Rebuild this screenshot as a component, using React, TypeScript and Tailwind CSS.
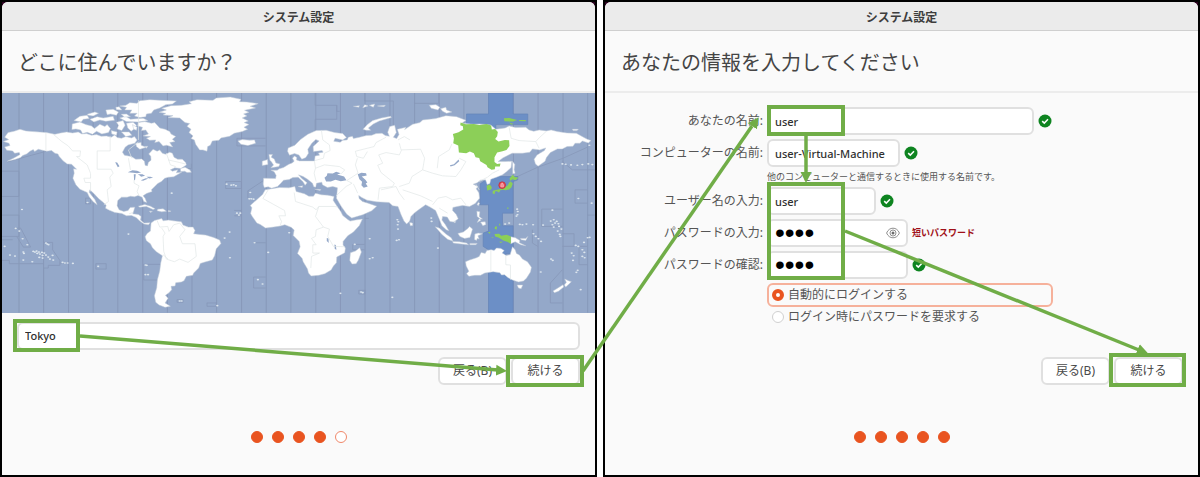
import type { ReactNode } from "react";

const zoneLines = Array.from({ length: 24 }, (_, i) => 57 + Math.round(i * 74.3));

const zoneBorders = [
  "M6 244H57V320H6M6 376H57V440H6M42 415H62L92 472H70L50 440M6 450H38M6 512H28V522H131",
  "M131 458H158V480L180 512V527H145V535H131V669M288 522H319V538H288ZM257 325H272V342H257ZM432 524H490M432 524V571H476M532 630H550V638H532Z",
  "M180 520H205M131 458V470M22 216L95 196L140 184M543 236H575V222",
  "M798 145H712V168H798M678 275H725V296H678ZM745 325V303L795 270M704 362H725V378H704M762 459H798M762 562H798M762 562V595H798M622 640H650V650H622Z",
  "M947 9V46H1012V88H947V122M1012 46V64H1021M1096 9V33H1182V110M1060 464V480H1096M1060 464H1096M1078 602H1097V613H1078ZM1096 386H1108",
  "M1244 40H1318V9M1542 266L1616 232L1690 206L1765 172M1690 215L1720 240H1788M1765 300H1728V340H1765M1765 376H1788M1690 358H1628V410H1690",
  "M1690 432H1725V470H1690M1600 420V460L1616 470M1690 540L1654 580V640H1690M1765 470H1740V525H1765",
];

const americas = [
  // mainland north america
  "M10 155L26 149L14 142L24 128L42 124L60 118L78 123L100 125L140 128L165 133L182 129L200 126L218 129L235 126L246 132L260 131L275 136L290 134L304 139L320 138L334 142L345 135L352 143L365 145L378 140L395 144L404 140L412 150L405 160L385 165L376 172L368 187L374 196L395 200L408 208L426 207L434 214L436 226L443 228L446 217L454 211L453 199L447 192L460 178L472 184L480 180L488 190L497 193L510 187L518 190L523 202L534 208L548 208L558 218L560 225L544 236L525 234L512 240L518 244L534 240L530 249L546 247L522 261L506 262L495 265L485 275L474 281L465 290L455 300L457 305L440 311L430 318L436 325L441 338L432 335L427 322L415 317L404 321L392 319L382 322L365 322L354 332L352 348L358 360L372 365L385 362L391 353L405 352L402 363L399 372L416 374L424 380L422 391L433 400L451 399L446 405L433 403L420 394L409 383L395 377L380 378L366 371L345 368L328 361L317 355L319 346L308 336L297 327L282 311L270 300L268 307L277 319L285 329L292 345L280 336L268 321L262 308L240 298L228 285L219 265L223 250L221 237L230 238L215 223L202 222L190 213L178 200L174 192L165 190L155 182L140 184L115 178L104 185L100 179L90 184L80 192L68 197L62 203L45 209L22 214L42 204L60 194L58 188L44 190L38 183L20 181L14 171L30 167L27 160Z",
  // arctic archipelago
  "M360 48L378 46L390 38L412 40L420 32L450 29L480 31L530 33L518 42L498 44L480 54L462 60L455 70L440 72L438 80L420 83L404 78L412 70L390 70L396 60L375 60L380 52Z",
  "M415 98L435 95L455 100L465 98L480 114L496 118L510 125L514 132L528 140L518 148L526 155L510 158L519 171L500 166L490 168L478 155L465 158L468 150L450 151L440 145L452 140L430 138L446 132L438 120L425 122L428 112L414 108Z",
  "M217 102L240 96L258 104L275 108L284 116L300 103L315 110L322 104L332 116L326 128L306 132L290 124L278 133L262 127L248 131L242 120L228 117L216 119Z",
  "M222 92L240 79L262 76L268 86L250 88L244 96ZM262 73L285 66L296 70L280 78L266 76ZM270 88L292 80L310 84L340 79L344 91L318 94L300 90L282 96Z",
  "M318 60L340 58L356 66L350 76L332 72L322 74ZM350 97L370 92L376 106L366 122L352 117L356 106ZM380 100L400 97L410 106L402 118L394 124L384 114ZM360 84L378 79L392 88L430 85L444 92L415 96L380 95Z",
  "M348 52L358 50L366 60L350 59ZM364 73L380 72L392 80L374 81ZM334 122L352 126L350 136L336 132ZM365 126L388 126L396 136L378 140ZM408 160L424 158L424 166L440 172L420 178L410 170ZM434 170L444 169L440 175ZM398 104L412 112L410 121L402 118Z",
  // caribbean
  "M416 349L435 344L452 349L466 357L460 359L440 350L420 352ZM474 358L490 357L500 364L486 366L472 363ZM449 364L458 365L452 368ZM506 362L514 364L506 366ZM542 236L556 232L570 240L575 247L562 248L555 244L543 245Z",
  // greenland
  "M478 67L500 60L486 55L514 47L545 46L575 41L568 35L592 29L640 31L650 24L692 21L724 28L720 35L742 36L776 41L752 49L768 54L735 61L748 67L732 72L742 78L728 84L746 93L734 98L748 104L733 112L744 118L728 125L704 130L690 139L664 144L658 151L638 153L632 166L624 170L622 184L610 180L600 180L588 163L584 150L574 146L580 138L568 128L574 118L562 109L570 101L556 98L540 84L505 83L520 77L490 75L498 70Z",
  // south america
  "M454 400L464 392L486 386L490 393L506 391L521 393L545 396L550 406L566 412L580 412L586 422L582 432L600 434L618 436L642 443L660 451L664 461L650 477L645 498L638 511L616 517L602 521L597 535L582 550L579 557L560 560L553 573L545 577L528 579L526 589L514 590L516 600L507 610L497 617L505 626L496 640L512 650L496 653L478 646L468 638L464 618L471 594L473 570L480 544L483 520L488 498L470 486L458 474L452 462L440 453L436 441L442 431L452 424Z",
];

const oldWorld = [
  // africa
  "M808 298L840 293L868 294L886 290L890 305L915 312L928 319L942 319L948 310L966 315L985 316L1004 320L1001 331L1014 351L1024 365L1030 377L1045 389L1052 394L1072 390L1089 388L1080 407L1062 427L1045 438L1031 455L1031 466L1038 475L1036 489L1012 502L1011 519L1002 529L995 541L976 552L958 557L935 559L927 550L924 538L911 516L908 506L894 491L902 471L899 455L881 437L884 421L876 413L856 405L842 409L822 412L798 415L782 404L772 400L758 380L753 371L757 354L752 347L770 331L789 314L797 300Z",
  "M1053 489L1068 484L1081 474L1086 487L1077 511L1070 522L1058 523L1051 512Z",
  // eurasia
  "M792 265L828 266L830 257L824 246L814 241L833 241L839 237L852 233L868 223L878 219L884 214L879 205L885 198L892 203L891 210L900 213L925 213L945 213L947 198L960 196L957 189L971 187L968 182L942 185L941 170L959 153L949 149L937 160L925 178L927 190L919 203L907 208L898 195L885 191L870 196L864 184L866 174L886 166L903 149L925 133L950 122L980 121L1006 128L1030 131L1041 143L1030 150L1007 145L1003 154L1022 157L1030 151L1043 150L1047 142L1059 139L1062 146L1080 142L1100 137L1117 136L1130 131L1148 130L1158 137L1170 139L1165 127L1171 110L1186 106L1191 128L1182 142L1192 146L1199 134L1194 118L1220 112L1216 119L1240 103L1262 98L1270 90L1309 86L1340 77L1372 80L1400 91L1388 100L1424 103L1441 102L1475 105L1490 118L1518 114L1530 108L1549 113L1580 112L1590 120L1604 124L1620 120L1642 123L1656 120L1675 125L1704 129L1732 130L1752 141L1765 148L1776 152L1768 159L1750 153L1743 160L1728 160L1722 169L1704 170L1690 177L1675 177L1654 188L1642 203L1638 214L1617 229L1609 222L1605 208L1614 195L1636 182L1640 174L1622 180L1600 177L1592 187L1570 190L1539 190L1511 204L1497 215L1519 215L1538 214L1536 233L1523 245L1510 255L1492 262L1475 268L1472 281L1464 284L1459 270L1444 271L1434 279L1422 283L1436 290L1431 297L1439 309L1441 325L1428 341L1411 350L1390 347L1374 350L1361 353L1360 362L1371 374L1377 387L1364 397L1352 395L1344 382L1330 380L1328 391L1338 404L1349 423L1341 420L1328 408L1318 383L1309 362L1293 352L1279 345L1262 357L1246 369L1235 380L1231 394L1222 403L1214 394L1205 374L1196 350L1180 348L1169 338L1131 336L1103 331L1087 323L1078 317L1079 326L1089 335L1106 340L1132 349L1117 363L1090 375L1057 385L1042 373L1025 349L1011 325L1013 306L1014 294L1000 290L984 293L969 285L967 277L951 280L949 292L943 291L939 280L924 268L911 260L897 255L907 266L923 279L917 286L910 275L896 262L880 263L869 269L852 271L844 280L834 290L816 295L806 291L794 293L791 283Z",
  // british isles, iceland
  "M808 194L819 194L815 202L824 207L829 219L841 222L838 230L814 234L822 225L816 216L811 211ZM788 214L804 209L805 224L788 227ZM715 153L728 149L750 151L765 150L768 160L745 167L724 163Z",
  // arctic russia
  "M1091 118L1104 104L1120 92L1146 84L1174 79L1176 83L1140 93L1122 102L1107 114L1114 121L1100 121ZM1062 49L1080 47L1078 52ZM1096 44L1106 48L1090 53ZM1110 46L1126 42L1122 52ZM1134 48L1158 46L1154 50Z",
  "M1290 46L1310 44L1322 52L1316 60L1296 55ZM1324 56L1340 52L1342 60L1358 66L1342 70L1330 64ZM1720 118L1738 118L1734 122L1722 122ZM946 298L964 299L962 302ZM896 290L910 288L908 293Z",
  "M1540 214L1547 224L1545 240L1548 250L1541 252ZM1437 338L1441 340L1437 348L1434 344ZM1231 398L1240 400L1240 407L1233 408ZM1364 394L1370 396L1366 400Z",
  // southeast asia
  "M1308 411L1320 415L1340 433L1356 444L1361 454L1346 449L1328 434ZM1360 455L1380 456L1402 460L1408 465L1380 462L1362 460ZM1412 461L1434 461L1430 465L1412 465ZM1376 431L1392 427L1406 416L1411 410L1420 418L1416 431L1412 443L1396 446L1382 440Z",
  "M1427 433L1437 430L1450 432L1436 438L1440 448L1434 446L1432 452L1426 449ZM1433 364L1442 366L1440 380L1450 388L1444 388L1434 380ZM1444 397L1458 396L1460 404L1451 408ZM1440 387L1446 391L1434 398Z",
  "M1535 441L1549 444L1562 452L1561 459L1580 468L1565 465L1548 456L1535 462ZM1564 446L1580 446L1586 440L1580 452L1566 450Z",
  // oceania
  "M1399 516L1411 511L1432 504L1440 500L1446 488L1458 491L1463 482L1476 480L1485 482L1492 475L1505 476L1515 482L1509 490L1521 497L1533 495L1540 471L1548 480L1552 491L1561 496L1570 508L1585 516L1597 533L1594 547L1582 566L1573 574L1558 577L1540 571L1527 564L1516 555L1507 556L1502 549L1482 546L1457 550L1444 557L1427 557L1409 560L1402 552L1409 545L1401 529ZM1554 586L1571 586L1566 597L1558 595Z",
  "M1697 568L1708 573L1717 576L1710 583L1700 592L1696 586L1702 578ZM1692 585L1694 592L1678 605L1666 609L1662 604L1678 594Z",
];

const lakes = [
  "M384 247L398 241L412 243L424 248L412 250L400 249ZM402 253L408 253L406 270L403 272ZM414 253L428 253L436 258L424 261L420 257ZM423 271L438 265L446 266L430 273ZM440 261L452 261L460 264L448 266ZM346 217L352 218L359 229L354 232Z",
  "M975 264L982 258L984 250L1000 251L1010 246L1024 250L1013 254L1034 260L1041 271L1024 274L1008 270L994 275L980 275ZM1075 253L1086 249L1100 250L1102 257L1087 260L1098 270L1104 278L1099 281L1105 290L1093 294L1086 286L1088 276L1080 268Z",
  "M1352 226L1364 223L1378 209L1380 214L1366 226L1354 230ZM982 445L987 446L988 460L982 454ZM1005 464L1009 466L1011 480L1006 478Z",
];

const countryLines = [
  "M138 129V183M160 133L186 155L205 168L218 183H242L240 200H230L262 225L272 250V265H252L256 278H272V305M331 138V183H292V238H334L340 250L330 262L334 290L322 300L326 335L312 345",
  "M416 30V150M416 156L386 180L396 205M386 205L392 240M403 270V280L418 288L412 305L418 318M500 190L512 225L528 230M388 372L400 368M505 210L540 218L556 222",
  "M472 392L480 412L504 410L508 425L522 405L540 400L556 420L540 440L548 462H586L590 500L565 518L540 508L524 516L500 508L492 485L490 440L496 430L486 415M490 495L505 508",
  "M806 300L790 326L855 362L858 378H838L846 395L842 408M884 308L888 335L940 352L950 360L958 350H1004L1014 351M958 350L948 380L972 412L990 418L985 440L1002 470L1036 471M972 412L950 420L948 440L936 446L950 465H940V490H960L936 500L934 535",
  "M945 214L948 235L944 250L950 275M966 122L970 150L990 165L992 182L975 190L972 205L946 212M948 235L975 225L1020 230L1036 240L1025 252M1160 142L1130 158L1124 170L1068 184L1072 200L1092 205L1104 185M1074 205L1068 225L1076 250L1042 272L1058 280L1040 290L1010 318",
  "M1138 195L1160 188L1200 195L1206 182L1200 160M1138 195L1150 220L1135 226L1145 248L1185 280L1180 290L1140 295L1136 330M1062 282L1075 310M1145 300L1190 290L1200 310L1215 330",
  "M1206 180L1264 178L1276 205L1270 240L1300 250L1330 258L1370 260L1385 240L1400 215L1380 205M1196 150L1215 140L1232 150M1270 240L1238 260L1230 280L1200 290M1210 300L1264 318L1300 335M1314 235L1318 200L1350 180L1358 162M1530 112L1536 145L1560 152L1610 155L1620 175M1610 155L1622 142L1642 124M1300 345L1316 325L1340 320L1360 330L1385 325L1400 345M1320 355L1345 370M1430 283L1440 300",
  "M1475 482V545M1520 496V525L1534 526V570M1440 275L1465 262L1480 250L1500 240",
];

const highlighted = [
  "M1384 98L1400 103L1424 102L1440 105L1462 102L1476 107L1478 119L1488 117L1496 126L1494 139L1488 147L1498 155L1517 150L1530 151L1531 168L1522 180L1510 184L1494 188L1486 202L1486 216L1494 222L1504 221L1502 230L1488 230L1487 238L1477 240L1465 232L1462 225L1443 214L1440 204L1429 202L1424 190L1412 185L1401 190L1379 188L1377 167L1362 160L1364 146L1361 132L1378 127L1392 119L1391 109L1383 106Z",
  "M1534 262L1541 255L1546 261L1558 264L1549 271L1540 268L1534 273L1531 267ZM1535 275L1541 281L1537 292L1530 299L1519 301L1511 300L1488 305L1486 313L1480 310L1481 303L1500 298L1516 293L1526 286L1530 278ZM1493 305L1503 301L1500 308ZM1462 288L1472 284L1478 292L1476 299L1464 302Z",
  "M1514 85L1530 84L1554 90L1542 95L1516 94ZM1560 90L1580 90L1580 94L1560 93ZM1530 98L1544 102L1536 104ZM1486 433L1500 432L1506 438L1522 435L1535 440V462L1524 456L1514 453L1498 443L1488 440ZM1488 410L1494 410L1492 420L1486 416ZM1524 353H1528V357H1524ZM1500 402H1503V407H1500ZM1466 428L1474 426L1472 432ZM1476 442L1484 443L1480 445ZM1500 456L1512 456L1504 460Z",
];

// [x, y] of islands too small to outline
const specks: [number, number][] = [
  [66, 359], [14, 470], [30, 496], [45, 499], [70, 487], [72, 491], [70, 511], [97, 516], [47, 416], [58, 424], [68, 447], [82, 465],
  [100, 485], [105, 487], [110, 484], [112, 491], [117, 487], [120, 493], [126, 488], [128, 497], [133, 490], [138, 496], [118, 503], [128, 505],
  [145, 502], [150, 508], [158, 497], [160, 511], [138, 460], [142, 463], [146, 465], [188, 518], [195, 520], [203, 520], [219, 521], [295, 530],
  [386, 433], [437, 526], [441, 527], [437, 555], [445, 555], [516, 310], [540, 634], [546, 634], [263, 338], [681, 283], [695, 286], [702, 285], [709, 288],
  [749, 327], [755, 327], [762, 328], [752, 308], [712, 370], [718, 376], [722, 370], [690, 427], [675, 445], [691, 504], [765, 459], [806, 488],
  [775, 570], [789, 583], [653, 648], [869, 429], [1023, 611], [1085, 607], [1090, 609], [1066, 464], [1111, 447], [1111, 507], [1120, 504], [1179, 623],
  [1194, 390], [1197, 396], [1195, 405], [1196, 418], [1192, 452], [1199, 450], [1296, 385], [1297, 395], [1316, 475],
  [1554, 358], [1556, 365], [1555, 375], [1552, 379], [1518, 403], [1530, 400], [1562, 404], [1570, 405], [1582, 403], [1602, 405], [1632, 406],
  [1655, 394], [1664, 390], [1668, 400], [1660, 405], [1673, 395], [1678, 402], [1664, 412], [1680, 410], [1687, 418], [1676, 424], [1682, 434], [1684, 440],
  [1738, 326], [1660, 361], [1778, 340], [1603, 432], [1610, 440], [1618, 447], [1626, 455], [1656, 508], [1661, 512], [1625, 547], [1745, 600],
  [1718, 490], [1724, 498], [1722, 512], [1730, 467], [1738, 470], [1750, 480], [1756, 488], [1750, 500], [1757, 504], [1766, 444], [1772, 443],
  [1690, 222], [1700, 223], [1716, 225], [1735, 226], [1750, 224], [1768, 222], [1780, 224], [1736, 542], [1732, 548], [1755, 458], [1771, 166],
];

function WorldMap() {
  return (
    <svg viewBox="6 9 1782 660" className="block h-auto w-full" role="img" aria-label="タイムゾーンの地図">
      <rect x="0" y="0" width="1800" height="680" fill="#94a8c9" />
      <g stroke="#8798b9" strokeWidth="3">
        {zoneLines.map((x) => (
          <path key={x} d={`M${x} 9V669`} />
        ))}
      </g>
      <g fill="none" stroke="#8798b9" strokeWidth="2.5">
        {zoneBorders.map((d) => (
          <path key={d} d={d} />
        ))}
      </g>
      <path
        d="M1468 9H1542V72H1586V104H1490V260H1556V270L1542 275V370H1510V408H1542V492H1520V560H1542V669H1468V480L1452 470V430L1468 424V345H1443V282L1468 265V120L1402 104V72H1468Z"
        fill="#6c8fc6"
        stroke="#6585b8"
        strokeWidth="2"
      />
      <g fill="#fff" stroke="#c3cdd8" strokeWidth="1.5" strokeLinejoin="round">
        {americas.map((d) => (
          <path key={d} d={d} />
        ))}
        {oldWorld.map((d) => (
          <path key={d} d={d} />
        ))}
      </g>
      <g fill="#94a8c9">
        {lakes.map((d) => (
          <path key={d} d={d} />
        ))}
      </g>
      <g fill="none" stroke="#dfe5e5" strokeWidth="2" strokeLinejoin="round">
        {countryLines.map((d) => (
          <path key={d} d={d} />
        ))}
      </g>
      <g fill="#dde6ee">
        {specks.map(([x, y]) => (
          <ellipse key={`${x}-${y}`} cx={x} cy={y} rx="3.5" ry="2.5" />
        ))}
      </g>
      <g fill="#8ccf58">
        {highlighted.map((d) => (
          <path key={d} d={d} />
        ))}
      </g>
      <circle cx="1509" cy="286" r="10" fill="#e8525c" stroke="#c22c38" strokeWidth="2.5" />
      <path d="M1509 279L1513 285V291H1505V285Z" fill="#f58d92" stroke="#fbd0d2" strokeWidth="1.5" />
    </svg>
  );
}

function CheckMark() {
  return (
    <svg viewBox="0 0 14 14" className="size-[14px] shrink-0" aria-hidden="true">
      <circle cx="7" cy="7" r="6.5" fill="#0e8420" />
      <path d="M4.2 7.1L6.3 9.1L10 5.3" fill="none" stroke="#fff" strokeWidth="1.5" />
    </svg>
  );
}

function EyeIcon() {
  return (
    <svg viewBox="0 0 14 12" className="h-3 w-[14px]" fill="none" stroke="#8f8f8f" aria-hidden="true">
      <path d="M.6 6C2 2.700 4.300 1.200 7 1.200C9.700 1.200 12 2.700 13.400 6C12 9.300 9.700 10.800 7 10.800C4.300 10.800 2 9.300 .6 6Z" />
      <circle cx="7" cy="6" r="3" />
      <circle cx="7" cy="6" r="1.500" fill="#6a6a6a" stroke="none" />
    </svg>
  );
}

function Window({ heading, done, children }: { heading: string; done: number; children: ReactNode }) {
  return (
    <section className="flex flex-col border-2 border-black bg-[#2c001e]">
      <div className="flex grow flex-col rounded-t-md bg-[#fafafa]">
        <div className="flex h-[29px] items-center justify-center rounded-t-md border-b border-[#cfcfcf] bg-[#ebebeb] pt-1 text-xs font-bold text-[#3d3d3d]">
          システム設定
        </div>
        <h1 className="flex h-[62px] items-center border-b-2 border-[#ececec] px-4 pt-1 text-xl text-[#454545]">{heading}</h1>
        {children}
        <div className="mt-auto mb-8 flex justify-center gap-[9px]">
          {[0, 1, 2, 3, 4].map((n) => (
            <span
              key={n}
              className={`size-3 rounded-full border ${n < done ? "border-[#e95420] bg-[#e95420]" : "border-[#f0886a] bg-white"}`}
            />
          ))}
        </div>
      </div>
    </section>
  );
}

function Buttons() {
  return (
    <div className="flex justify-end gap-1 pr-[15px] text-xs text-[#4a4a4a]">
      <button type="button" className="h-7 w-[69px] rounded-md border-2 border-[#e0e0e0] bg-white">
        戻る(B)
      </button>
      <button type="button" className="h-7 w-[69px] rounded-md border-2 border-[#e0e0e0] bg-white">
        続ける
      </button>
    </div>
  );
}

const fieldClass = "h-7 rounded-md border-2 border-[#e0e0e0] bg-white px-[6px] outline-none";
const textClass = "text-[11px] font-medium text-[#303030]";
const bulletClass = "font-['Liberation_Sans',sans-serif] text-[28px] leading-6 text-black";
const radioClass =
  "size-3 appearance-none rounded-full border border-[#d0d0d0] bg-white checked:border-4 checked:border-[#e95420]";

function Field({ id, label, children }: { id: string; label: string; children: ReactNode }) {
  return (
    <>
      <label htmlFor={id} className="text-right">
        {label}
      </label>
      <div className="flex items-center gap-1">{children}</div>
    </>
  );
}

function Annotations() {
  return (
    <svg
      viewBox="0 0 1200 477"
      preserveAspectRatio="none"
      className="pointer-events-none absolute inset-0 size-full"
      fill="none"
      stroke="#70ad47"
      strokeWidth="4"
      aria-hidden="true"
    >
      <defs>
        <marker id="head" markerUnits="userSpaceOnUse" markerWidth="12" markerHeight="12" refX="10" refY="6" orient="auto">
          <path d="M0 0.500L11 6L0 11.500Z" fill="#70ad47" stroke="none" />
        </marker>
      </defs>
      <rect x="15" y="321" width="63" height="29" />
      <rect x="508" y="357" width="74" height="28" />
      <rect x="769" y="107" width="74" height="27" />
      <rect x="769" y="184" width="74" height="94" />
      <rect x="1111" y="355" width="73" height="30" />
      <g strokeWidth="3.500">
        <path d="M80 336L498 370" />
        <path d="M583 371L752 126" />
        <path d="M806 135V174" />
        <path d="M845 231L1139 350" />
      </g>
      <g stroke="none">
        <path d="M80 336L506 371" markerEnd="url(#head)" />
        <path d="M583 371L758 118" markerEnd="url(#head)" />
        <path d="M806 135V182" markerEnd="url(#head)" />
        <path d="M845 231L1147 353" markerEnd="url(#head)" />
      </g>
    </svg>
  );
}

export default function App() {
  return (
    <main className="relative grid min-h-screen grid-cols-2 gap-[6px] bg-white font-['Noto_Sans','Noto_Sans_CJK_JP',sans-serif]">
      <Window heading="どこに住んでいますか？" done={4}>
        <WorldMap />
        <div className="px-[15px] pt-[9px] pb-[7px]">
          <input aria-label="場所" defaultValue="Tokyo" className={`block w-full ${fieldClass} ${textClass}`} />
        </div>
        <Buttons />
      </Window>

      <Window heading="あなたの情報を入力してください" done={5}>
        <form className="grid grid-cols-[158px_1fr] items-center gap-1 pt-[14px] text-xs text-[#555]">
          <Field id="name" label="あなたの名前:">
            <input id="name" defaultValue="user" className={`w-[267px] ${fieldClass} ${textClass}`} />
            <CheckMark />
          </Field>
          <Field id="host" label="コンピューターの名前:">
            <input id="host" defaultValue="user-Virtual-Machine" className={`w-[133px] ${fieldClass} ${textClass}`} />
            <CheckMark />
          </Field>
          <p className="col-start-2 text-[9px] leading-3">他のコンピューターと通信するときに使用する名前です。</p>
          <Field id="login" label="ユーザー名の入力:">
            <input id="login" defaultValue="user" className={`w-[109px] ${fieldClass} ${textClass}`} />
            <CheckMark />
          </Field>
          <Field id="password" label="パスワードの入力:">
            <div className={`flex w-[141px] items-center ${fieldClass}`}>
              <input id="password" type="password" defaultValue="user" className={`h-6 w-0 grow outline-none ${bulletClass}`} />
              <button type="button" aria-label="パスワードを表示">
                <EyeIcon />
              </button>
            </div>
            <span className="text-[9px] font-bold text-[#a01018]">短いパスワード</span>
          </Field>
          <Field id="confirm" label="パスワードの確認:">
            <input id="confirm" type="password" defaultValue="user" className={`w-[141px] ${fieldClass} ${bulletClass}`} />
            <CheckMark />
          </Field>
          <fieldset className="col-start-2 flex flex-col gap-[2px]">
            <label className="flex h-6 w-[286px] items-center gap-1 rounded-md border-2 border-[#f6b19b] px-[3px]">
              <input type="radio" name="mode" defaultChecked className={radioClass} />
              自動的にログインする
            </label>
            <label className="flex h-4 items-center gap-1 px-[5px]">
              <input type="radio" name="mode" className={radioClass} />
              ログイン時にパスワードを要求する
            </label>
          </fieldset>
        </form>
        <div className="pt-8">
          <Buttons />
        </div>
      </Window>
      <Annotations />
    </main>
  );
}
